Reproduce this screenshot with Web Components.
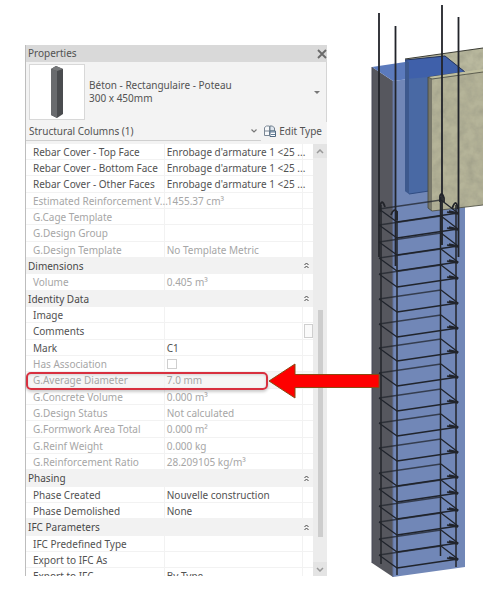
<!DOCTYPE html>
<html lang="en">
<head>
<meta charset="utf-8">
<title>Properties</title>
<style>
    body {
        margin: 0;
        background: #fff;
        color: #525252;
        font: 10px/13px "Noto Sans", "Open Sans", sans-serif;
    }
</style>
</head>
<body>
<model-stage>
    <properties-panel heading="Properties">
        <type-selector slot="type" family="Béton - Rectangulaire - Poteau" type="300 x 450mm"></type-selector>
        <category-filter slot="filter" value="Structural Columns (1)"></category-filter>
        <properties-grid></properties-grid>
        <row-callout slot="callout"></row-callout>
    </properties-panel>
    <column-view></column-view>
</model-stage>

<script>
class ModelStage extends HTMLElement {
    constructor(){
        super();
        this.attachShadow({mode:"open"}).innerHTML = `
            <style>
                :host {
                    display: grid;
                    grid-template-columns: minmax(0, 302fr) minmax(0, 116fr);
                    column-gap: 41px;
                    align-items: start;
                    padding: 0 16px 0 25px;
                }
            </style>
            <slot></slot>
        `;
    }
}
customElements.define("model-stage",ModelStage);

class PropertiesPanel extends HTMLElement {
    constructor(){
        super();
        this.attachShadow({mode:"open"}).innerHTML = `
            <style>
                :host {
                    display: block;
                    position: relative;
                    margin-top: 45px;
                    border-left: 1px solid #bdbdbd;
                    background: #f3f3f3;
                }
                header {
                    display: flex;
                    justify-content: space-between;
                    align-items: center;
                    height: 17px;
                    padding-left: 2px;
                    background: #d9d9d9;
                }
                h1 {
                    margin: 0;
                    font: inherit;
                }
                button {
                    display: flex;
                    padding: 0;
                    border: 0;
                    background: none;
                }
            </style>
            <header>
                <h1></h1>
                <button aria-label="Close">
                    <svg width="10" height="10" viewBox="0 0 10 10"><path d="M1 1l8 8M9 1l-8 8" stroke="#6a6a6a" stroke-width="1.8"/></svg>
                </button>
            </header>
            <slot name="type"></slot>
            <slot name="filter"></slot>
            <slot></slot>
            <slot name="callout"></slot>
        `;
        this.shadowRoot.querySelector("h1").textContent = this.getAttribute("heading");
    }
}
customElements.define("properties-panel",PropertiesPanel);

class TypeSelector extends HTMLElement {
    constructor(){
        super();
        this.attachShadow({mode:"open"}).innerHTML = `
            <style>
                :host {
                    display: block;
                    border-right: 1px solid #d5d5d5;
                }
                button {
                    display: flex;
                    align-items: center;
                    gap: 4px;
                    width: 100%;
                    height: 60px;
                    padding: 0 6px 0 3px;
                    border: 0;
                    background: none;
                    font: inherit;
                    color: inherit;
                    text-align: left;
                }
                .thumb {
                    border: 1px solid #d8d8d8;
                    background: #fff;
                }
                .text {
                    flex: 1;
                }
                .text span {
                    display: block;
                }
            </style>
            <button>
                <svg class="thumb" width="54" height="54" viewBox="0 0 54 54">
                    <path d="M21 4l5-3 7 3v45l-6 4-6-3z" fill="#4a4c4f"/>
                    <path d="M21 4l6 2v47l-6-3z" fill="#696b6e"/>
                    <path d="M21 4l5-3 7 3-6 2z" fill="#77797b"/>
                </svg>
                <span class="text"><span id="family"></span><span id="type"></span></span>
                <svg width="6" height="3" viewBox="0 0 6 3"><path d="M0 0h6L3 3z" fill="#777"/></svg>
            </button>
        `;
        this.shadowRoot.getElementById("family").textContent = this.getAttribute("family");
        this.shadowRoot.getElementById("type").textContent = this.getAttribute("type");
    }
}
customElements.define("type-selector",TypeSelector);

class CategoryFilter extends HTMLElement {
    constructor(){
        super();
        this.attachShadow({mode:"open"}).innerHTML = `
            <style>
                :host {
                    display: flex;
                    height: 22px;
                    padding-right: 5px;
                }
                .filter {
                    display: flex;
                    align-items: center;
                    flex: 1;
                    height: 18px;
                    margin-right: 3px;
                    padding-right: 4px;
                    border-bottom: 1px solid #cfcfcf;
                }
                select, button {
                    appearance: none;
                    padding: 0;
                    border: 0;
                    background: none;
                    font: inherit;
                    color: inherit;
                }
                select {
                    flex: 1;
                    padding-left: 3px;
                }
                button {
                    display: flex;
                    align-items: center;
                    gap: 3px;
                    height: 18px;
                    white-space: nowrap;
                }
            </style>
            <div class="filter">
                <select aria-label="Category"><option></option></select>
                <svg width="6" height="4" viewBox="0 0 6 4"><path d="M.5.5L3 3 5.500.5" fill="none" stroke="#777" stroke-width="1.200"/></svg>
            </div>
            <button>
                <svg width="12" height="12" viewBox="0 0 12 12" fill="none">
                    <path d="M.5 10.500v-8l2-1.500h3v9.500zM.5 6h5" fill="#f7f8fa" stroke="#7b8794"/>
                    <path d="M6 1h2.500l2 2v3H6z" fill="#dfe6ee" stroke="#71808f"/>
                    <path d="M6 6h5.500v5.500H6z" fill="#fff" stroke="#4f6880"/>
                    <path d="M6 7h5.500M7 9.500h4" stroke="#5f7c99"/>
                </svg>
                Edit Type
            </button>
        `;
        this.shadowRoot.querySelector("option").textContent = this.getAttribute("value");
    }
}
customElements.define("category-filter",CategoryFilter);

// [name, value, state], a row with only a name is a group header
const ROWS = [
    ["Rebar Cover - Top Face","Enrobage d'armature 1 <25 ..."],
    ["Rebar Cover - Bottom Face","Enrobage d'armature 1 <25 ..."],
    ["Rebar Cover - Other Faces","Enrobage d'armature 1 <25 ..."],
    ["Estimated Reinforcement V...","1455.37 cm³","readonly"],
    ["G.Cage Template","","readonly"],
    ["G.Design Group","","readonly"],
    ["G.Design Template","No Template Metric","readonly"],
    ["Dimensions"],
    ["Volume","0.405 m³","readonly"],
    ["Identity Data"],
    ["Image",""],
    ["Comments","","browse"],
    ["Mark","C1"],
    ["Has Association",false,"readonly"],
    ["G.Average Diameter","7.0 mm","readonly marked"],
    ["G.Concrete Volume","0.000 m³","readonly"],
    ["G.Design Status","Not calculated","readonly"],
    ["G.Formwork Area Total","0.000 m²","readonly"],
    ["G.Reinf Weight","0.000 kg","readonly"],
    ["G.Reinforcement Ratio","28.209105 kg/m³","readonly"],
    ["Phasing"],
    ["Phase Created","Nouvelle construction"],
    ["Phase Demolished","None"],
    ["IFC Parameters"],
    ["IFC Predefined Type",""],
    ["Export to IFC As",""],
    ["Export to IFC","By Type"]
];

class PropertiesGrid extends HTMLElement {
    constructor(){
        super();
        this.attachShadow({mode:"open"}).innerHTML = `
            <style>
                :host {
                    display: grid;
                    grid-template-columns: minmax(0, 1fr) 14px;
                    max-height: 432px;
                    overflow: hidden;
                    background: #fff;
                }
                .rows {
                    min-height: 0;
                    max-height: 432px;
                    overflow: hidden;
                }
                table {
                    width: 100%;
                    table-layout: fixed;
                    border-collapse: separate;
                    border-spacing: 0;
                }
                .name { width: 48%; }
                .tool { width: 11px; }
                tr { height: 16px; }
                tr:nth-child(3n) { height: 17px; }
                th, td {
                    box-sizing: border-box;
                    padding: 0;
                    border-bottom: 1px solid #f2f2f2;
                    font-weight: normal;
                    text-align: left;
                    white-space: nowrap;
                    line-height: 14px;
                }
                td { border-left: 1px solid #f2f2f2; }
                td:nth-child(2) { padding-left: 2px; }
                th { padding-left: 7px; }
                .group th {
                    padding-left: 2px;
                    background: #f2f2f2;
                    color: #484848;
                }
                .group div {
                    display: flex;
                    justify-content: space-between;
                    padding-right: 4px;
                }
                .readonly { color: #a6a6a6; }
                .marked { background: #f6f6f6; }
                button {
                    display: flex;
                    align-items: center;
                    padding: 0;
                    border: 0;
                    background: none;
                }
                .browse button {
                    width: 9px;
                    height: 14px;
                    margin-left: auto;
                    border: 1px solid #cfcfcf;
                    background: #fafafa;
                }
                input {
                    appearance: none;
                    display: block;
                    width: 10px;
                    height: 10px;
                    margin: 0;
                    border: 1px solid #cfcfcf;
                }
                .scrollbar {
                    display: flex;
                    flex-direction: column;
                    align-items: center;
                    background: #ececec;
                }
                .scrollbar button {
                    justify-content: center;
                    width: 14px;
                    height: 14px;
                    background: #e4e4e4;
                }
                .track {
                    flex: 1;
                    display: grid;
                    grid-template-rows: 152fr 227fr 25fr;
                }
                .thumb {
                    grid-row: 2;
                    width: 5px;
                    background: #cdcdcd;
                }
            </style>
            <div class="rows">
                <table>
                    <colgroup><col class="name"><col><col class="tool"></colgroup>
                    <tbody></tbody>
                </table>
            </div>
            <div class="scrollbar">
                <button aria-label="Scroll up"><svg width="8" height="5" viewBox="0 0 8 5"><path d="M1 4l3-3 3 3" fill="none" stroke="#999" stroke-width="1.500"/></svg></button>
                <div class="track"><div class="thumb"></div></div>
                <button aria-label="Scroll down"><svg width="8" height="5" viewBox="0 0 8 5"><path d="M1 1l3 3 3-3" fill="none" stroke="#999" stroke-width="1.500"/></svg></button>
            </div>
        `;
        this.shadowRoot.querySelector("tbody").innerHTML = ROWS.map((row)=>this.renderRow(row)).join("");
    }

    renderRow([name,value,state = ""]){
        if (value===undefined){
            return `<tr class="group"><th colspan="3"><div>${name}<button aria-label="Collapse ${name}">
                <svg width="5" height="7" viewBox="0 0 5 7"><path d="M.5 3l2-2 2 2M.5 6l2-2 2 2" fill="none" stroke="#444"/></svg>
            </button></div></th></tr>`;
        }
        let label = name;
        let content = value;
        if (value===false){
            label = `<label for="association">${name}</label>`;
            content = `<input type="checkbox" id="association" disabled>`;
        }else{
            content = value.replace(/</g,"&lt;");
        }
        let tool = state=="browse"?`<button aria-label="Browse"></button>`:"";
        return `<tr class="${state}"><th scope="row">${label}</th><td>${content}</td><td>${tool}</td></tr>`;
    }
}
customElements.define("properties-grid",PropertiesGrid);

class RowCallout extends HTMLElement {
    constructor(){
        super();
        this.attachShadow({mode:"open"}).innerHTML = `
            <style>
                :host {
                    display: flex;
                    align-items: center;
                    position: absolute;
                    z-index: 1;
                    top: 317px;
                    left: 0;
                    right: -53px;
                    pointer-events: none;
                }
                .frame {
                    flex: 1;
                    box-sizing: border-box;
                    height: 18px;
                    border: 2px solid #d8303f;
                    border-radius: 5px;
                    box-shadow: 0 2px 3px #0003, inset 0 1px 3px #0002;
                }
            </style>
            <div class="frame"></div>
            <svg width="112" height="38" viewBox="0 0 112 38">
                <path d="M1 19L27 2v10.500h84v13H27V36z" fill="#fe0000" stroke="#8a4a12"/>
            </svg>
        `;
    }
}
customElements.define("row-callout",RowCallout);

// height of the front left corner of each stirrup
const STIRRUPS = [222,238,255,271,287,312,337,361,386,411,436,461,486,502,519,535,552,568];

class ColumnView extends HTMLElement {
    constructor(){
        super();
        this.attachShadow({mode:"open"}).innerHTML = `
            <style>
                :host { display: block; }
                svg {
                    display: block;
                    width: 100%;
                }
            </style>
            <svg viewBox="368 0 116 590" fill="none" role="img" aria-label="Reinforced column">
                <defs>
                    <filter id="concrete" x="0" y="0" width="100%" height="100%">
                        <feTurbulence type="fractalNoise" baseFrequency=".12" numOctaves="3" seed="4"/>
                        <feColorMatrix values="0 0 0 0 .3  0 0 0 0 .3  0 0 0 0 .22  .8 .5 0 0 -.45"/>
                        <feComposite in2="SourceGraphic" operator="in"/>
                        <feMerge>
                            <feMergeNode in="SourceGraphic"/>
                            <feMergeNode/>
                        </feMerge>
                    </filter>
                </defs>
                <path d="M405 59l78-11v25l-78 4z" fill="#bab99f" filter="url(#concrete)"/>
                <path d="M405 59l78-11" stroke="#3c3d35"/>
                <path d="M372 67l21 14v496l-21-14z" fill="#56575e"/>
                <path d="M393 81l72-9v495l-72 10z" fill="#7187b7"/>
                <path d="M372 67l73-11 20 16-72 9z" fill="#5b7abc"/>
                <path d="M405 60l40-4 20 16-36 5v114l-20 3-4-3z" fill="#4969a4"/>
                <path d="M405 60l40-4 20 16-36 5-24 2z" fill="#3f60aa"/>
                <path d="M405 60v131l4 3V62z" fill="#3d598e"/>
                <path d="M405 60l40-4 20 16-36 5" stroke="#26355b"/>
                <path d="M409 194l20-3" stroke="#304c82"/>
                <path d="M393 81v496" stroke="#62729b"/>
                <path d="M372 67v496" stroke="#484b59"/>
                <path d="M432 79l51-7v133l-51 6z" fill="#b5b499" filter="url(#concrete)"/>
                <path d="M428 77l4 2v132l-4-3z" fill="#77776a"/>
                <path d="M428 77l55-8v3l-51 7z" fill="#c0bf9f"/>
                <path d="M428 77l4 2 51-7M428 77v131l4 3 51-6" stroke="#45463b" stroke-width=".8"/>
                <g id="cage" stroke="#20242c" stroke-width="1.300" stroke-linejoin="round"></g>
                <g stroke="#22242a" stroke-width="1.800">
                    <path d="M379 13v244M395.500 26v240M442 5v240M458.500 17v240"/>
                    <path d="M381 205v359M397 211v364M440.500 197v359M456 205v362" stroke-width="1.500"/>
                    <path d="M380 212v-6q2-8 5 1M391 215q3-8 6-3v8M440 202v-6q2-5 4 2v4M452 209q4-12 6 0"/>
                </g>
            </svg>
        `;
        this.shadowRoot.getElementById("cage").innerHTML = STIRRUPS.map((y)=>`
            <path d="M379 ${y-13}L441 ${y-22}" opacity=".75"/>
            <path d="M441 ${y-22}L458 ${y-9}L397 ${y}L379 ${y-13}"/>
            <path d="M447 ${y-10}l11 2M449 ${y-11}l9 2" stroke-width="1.500"/>
        `).join("");
    }
}
customElements.define("column-view",ColumnView);
</script>
</body>
</html>
